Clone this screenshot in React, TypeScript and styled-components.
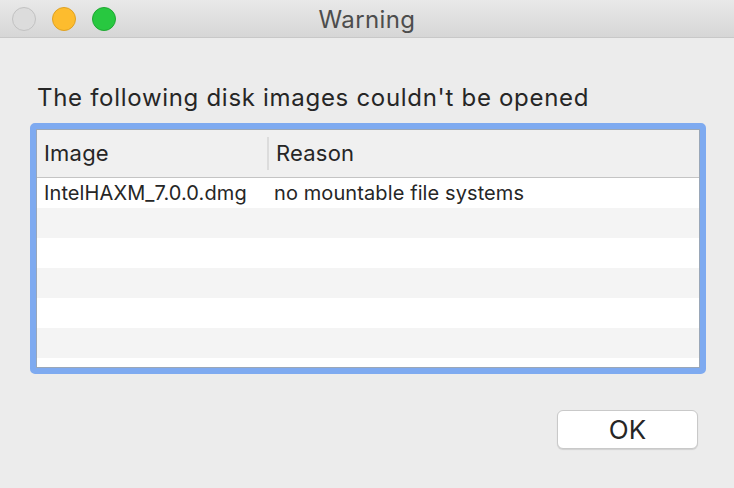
import styled, { createGlobalStyle } from "styled-components";

const GlobalStyle = createGlobalStyle`
  html, body {
    margin: 0;
    padding: 0;
    background: #ececec;
  }
  body {
    font-family: Inter, "Noto Sans", "Liberation Sans", sans-serif;
    -webkit-font-smoothing: antialiased;
  }
`;

interface DiskRow {
  image: string;
  reason: string;
}

const rows: DiskRow[] = [
  { image: "IntelHAXM_7.0.0.dmg", reason: "no mountable file systems" },
  { image: "", reason: "" },
  { image: "", reason: "" },
  { image: "", reason: "" },
  { image: "", reason: "" },
  { image: "", reason: "" },
  { image: "", reason: "" },
];

function App() {
  return (
    <>
      <GlobalStyle />
      <Window>
        <TitleBar>
          <Lights>
            <Light $fill="#dcdcdc" $edge="#c2c2c2" />
            <Light $fill="#fdbc2e" $edge="#dea123" />
            <Light $fill="#28c840" $edge="#1fa832" />
          </Lights>
          <Title>Warning</Title>
          <span />
        </TitleBar>
        <Body>
          <Message>The following disk images couldn't be opened</Message>
          <FocusRing>
            <Table>
              <HeaderRow>
                <HeaderCell>Image</HeaderCell>
                <HeaderCell $divider>Reason</HeaderCell>
              </HeaderRow>
              <Rows>
                {rows.map((row, index) => (
                  <Row key={index} $striped={index % 2 === 1}>
                    <Cell>{row.image}</Cell>
                    <Cell>{row.reason}</Cell>
                  </Row>
                ))}
              </Rows>
            </Table>
          </FocusRing>
          <Footer>
            <Button>OK</Button>
          </Footer>
        </Body>
      </Window>
    </>
  );
}

export default App;

const Window = styled.div`
  width: 734px;
  height: 488px;
  display: flex;
  flex-direction: column;
  background: #ececec;
  overflow: hidden;
`;

const TitleBar = styled.div`
  height: 38px;
  flex-shrink: 0;
  display: grid;
  grid-template-columns: 1fr auto 1fr;
  align-items: center;
  background: linear-gradient(#e9e9e9, #d6d6d6);
  border-bottom: 1px solid #c8c8c8;
  box-sizing: border-box;
`;

const Lights = styled.div`
  display: flex;
  gap: 16px;
  padding-left: 12px;
`;

const Light = styled.span<{ $fill: string; $edge: string }>`
  width: 22px;
  height: 22px;
  border-radius: 50%;
  background: ${(p) => p.$fill};
  border: 1px solid ${(p) => p.$edge};
`;

const Title = styled.div`
  font-size: 24px;
  letter-spacing: 0.4px;
  color: #4d4d4d;
  padding-top: 1px;
`;

const Body = styled.div`
  display: flex;
  flex-direction: column;
  padding: 46px 28px 0 30px;
`;

const Message = styled.div`
  font-size: 24px;
  letter-spacing: 0.7px;
  line-height: 28px;
  color: #262626;
  padding-left: 7px;
  margin-bottom: 11px;
`;

const FocusRing = styled.div`
  width: 676px;
  height: 251px;
  box-sizing: border-box;
  border: 6px solid #7eaaf0;
  border-radius: 5px;
  background: #7eaaf0;
`;

const Table = styled.div`
  height: 100%;
  box-sizing: border-box;
  border: 1px solid #9aa7b8;
  background: #ffffff;
  display: flex;
  flex-direction: column;
  overflow: hidden;
`;

const HeaderRow = styled.div`
  height: 48px;
  flex-shrink: 0;
  display: grid;
  grid-template-columns: 230px 1fr;
  align-items: center;
  background: #f0f0f0;
  border-bottom: 1px solid #c4c4c4;
  box-sizing: border-box;
`;

const HeaderCell = styled.div<{ $divider?: boolean }>`
  font-size: 22px;
  letter-spacing: 0.2px;
  color: #262626;
  padding-left: 7px;
  height: 33px;
  line-height: 33px;
  border-left: ${(p) => (p.$divider ? "2px solid #dcdcdc" : "none")};
`;

const Rows = styled.div`
  display: flex;
  flex-direction: column;
`;

const Row = styled.div<{ $striped: boolean }>`
  height: 30px;
  flex-shrink: 0;
  display: grid;
  grid-template-columns: 230px 1fr;
  align-items: center;
  background: ${(p) => (p.$striped ? "#f4f4f4" : "#ffffff")};
`;

const Cell = styled.div`
  font-size: 20px;
  letter-spacing: 0.1px;
  color: #262626;
  padding-left: 7px;
  white-space: nowrap;
`;

const Footer = styled.div`
  display: flex;
  justify-content: flex-end;
  padding-top: 36px;
  padding-right: 8px;
`;

const Button = styled.button`
  width: 141px;
  height: 39px;
  border: 1px solid #c9c9c9;
  border-radius: 6px;
  background: #ffffff;
  box-shadow: 0 1px 1px rgba(0, 0, 0, 0.12);
  font-family: Inter, "Noto Sans", "Liberation Sans", sans-serif;
  font-size: 26px;
  color: #262626;
  padding: 0;
`;
